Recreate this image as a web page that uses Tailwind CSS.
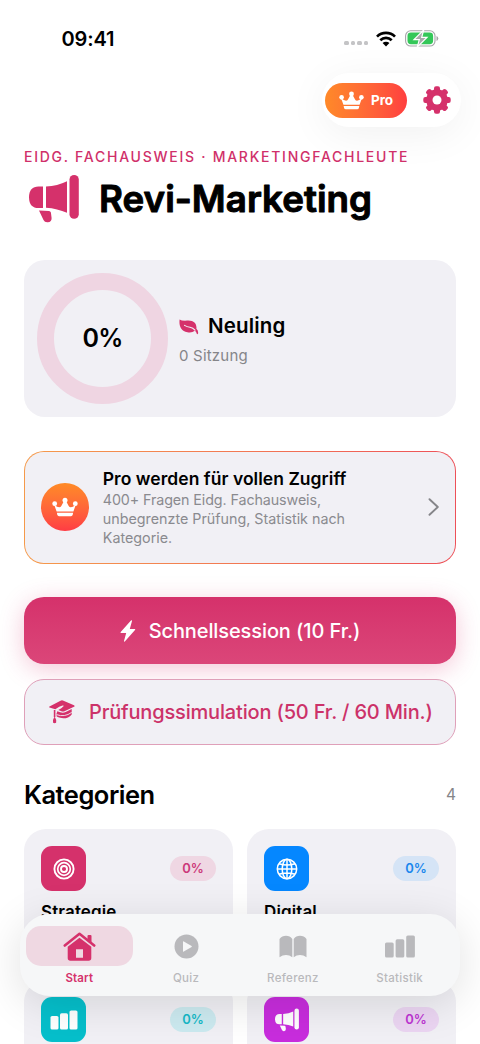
<!DOCTYPE html>
<html lang="de">
<head>
<meta charset="utf-8">
<meta name="viewport" content="width=device-width, initial-scale=1">
<title>Revi-Marketing</title>
<script src="https://cdn.jsdelivr.net/npm/@tailwindcss/browser@4"></script>
</head>
<body class="bg-white">
<svg class="hidden" xmlns="http://www.w3.org/2000/svg">
  <symbol id="crown" viewBox="0 0 26 19">
    <g fill="currentColor"><circle cx="13" cy="2.7" r="2.5"/><circle cx="2.7" cy="6.2" r="2.4"/><circle cx="23.3" cy="6.2" r="2.4"/>
    <path d="M2.2 7.2Q7.6 11.6 9.3 8.4L12 3.5h2l2.700 4.900Q18.400 11.600 23.800 7.200L21.400 14H4.600Z"/>
    <path d="M4.900 15.300h16.200l-.4 2q-.3 1.400-1.700 1.400H7q-1.400 0-1.700-1.400z"/></g>
  </symbol>
  <symbol id="megaphone" viewBox="0 0 50 48">
    <g fill="currentColor"><path d="M14 11.500v21.600H9.500C3.500 33.100 0 29.600 0 22.300s3.500-10.800 9.500-10.800z"/>
    <path d="M17 11.500Q28.500 11 38 6.300v31.500Q28.500 33.500 17 32.700z"/>
    <rect x="40.500" y="0" width="9.300" height="43.800" rx="4.600"/>
    <path d="M10 35.500 14.500 45q1.200 2.600 4.300 2.300 4-.4 3.800-4.300l-.7-5.500q-.5-1.300-1.900-1.400z"/></g>
  </symbol>
</svg>
<div class="relative flex h-[1044px] w-[480px] flex-col overflow-hidden bg-white font-['Inter','Noto_Sans',sans-serif] text-black">
  <!-- status bar -->
  <div class="flex h-[73px] shrink-0 items-start justify-between pl-[61.500px] pr-[41px]">
    <span class="mt-[27px] text-[20px] font-semibold leading-6 tracking-[-0.150px]">09:41</span>
    <div class="mt-[30px] flex items-center">
      <div class="mr-[8px] mt-[9px] flex gap-[2px] text-[#c4c4c6]">
        <i class="h-1 w-[4.500px] rounded-[1.500px] bg-current"></i><i class="h-1 w-[4.500px] rounded-[1.500px] bg-current"></i><i class="h-1 w-[4.500px] rounded-[1.500px] bg-current"></i><i class="h-1 w-[4.500px] rounded-[1.500px] bg-current"></i>
      </div>
      <svg class="mr-[9px] h-[16px] w-[20px]" viewBox="0 0 20 16" fill="none" stroke="#000" stroke-width="2.700"><path d="M1 5.600a12.800 12.800 0 0 1 18 0"/><path d="M4.300 9.200a8.200 8.200 0 0 1 11.400 0"/><path d="M6.600 12.100a4.800 4.800 0 0 1 6.800 0L10 15.500Z" fill="#000" stroke="none"/></svg>
      <svg class="h-[17px] w-[34px]" viewBox="0 0 34 17"><rect x=".6" y=".8" width="29.400" height="15.200" rx="5" fill="none" stroke="#a5a5a8" stroke-width="1.100"/><rect x="2.500" y="2.600" width="25.600" height="11.600" rx="3.400" fill="#34c759"/><path d="M31.500 6v5q1.800-.8 1.800-2.500T31.500 6" fill="#a5a5a8"/><path d="M18.700 0 9 9.600h5.300L12.300 17 22 7.400h-5.300Z" fill="#a9a9ac" stroke="#fff" stroke-width="1.200"/></svg>
    </div>
  </div>
  <!-- toolbar -->
  <div class="ml-auto mr-[19px] flex h-[54px] w-[139px] shrink-0 items-center rounded-full bg-white pl-[3px] shadow-[0_7px_42px_rgba(0,0,0,0.06)]">
    <div class="flex h-[35px] w-[82px] items-center rounded-full bg-linear-to-r from-[#ff8928] to-[#ff3e3f] pl-[14px] text-white">
      <svg class="h-[19px] w-[25px]"><use href="#crown"/></svg>
      <span class="ml-[7px] text-[13.500px] font-bold tracking-[-0.100px]">Pro</span>
    </div>
    <svg class="ml-[16px] h-[28px] w-[28px] text-[#d5316b]" viewBox="-14 -14 28 28" fill="currentColor"><g><rect x="-3" y="-13.700" width="6" height="27.400" rx="2"/><rect x="-3" y="-13.700" width="6" height="27.400" rx="2" transform="rotate(45)"/><rect x="-3" y="-13.700" width="6" height="27.400" rx="2" transform="rotate(90)"/><rect x="-3" y="-13.700" width="6" height="27.400" rx="2" transform="rotate(135)"/></g><circle r="10.800"/><circle r="4.500" fill="#fff"/></svg>
  </div>
  <!-- headline -->
  <div class="mt-[20px] h-5 pl-[24px] text-[14px] font-medium leading-5 tracking-[1.740px] whitespace-nowrap text-[#d0306a]">EIDG. FACHAUSWEIS · MARKETINGFACHLEUTE</div>
  <div class="mt-[8px] flex h-[50px] shrink-0 pl-[29px]">
    <svg class="h-[48px] w-[50px] shrink-0 text-[#d5316b]"><use href="#megaphone"/></svg>
    <svg class="ml-[12px] h-[50px] w-[300px] overflow-visible" role="heading"><text x="8" y="37" textLength="273" lengthAdjust="spacingAndGlyphs" font-size="37" font-weight="600" stroke="#000" stroke-width="1" stroke-linejoin="round">Revi-Marketing</text></svg>
  </div>
  <!-- level card -->
  <div class="mx-6 mt-[35px] flex h-[157px] shrink-0 items-center rounded-[21px] bg-[#f1f0f5] pl-[13px]">
    <div class="flex h-[131px] w-[131px] items-center justify-center rounded-full border-[17px] border-[#efd5e2] text-[25px] font-semibold tracking-[-0.700px]">0%</div>
    <div class="ml-[11px] flex flex-col pt-[3px]">
      <div class="flex h-[26px] items-center">
        <svg class="mr-[9px] h-[16px] w-[20px]" viewBox="0 0 20 16"><path d="M.6.500Q3 2 8 1.600C15 1 18 5 17.400 9.800q1.800 1.300 1.800 4.300-.1 1.300-1.300 1-.6-2.300-2-3.300-3 2.400-7.500 1.500C2 12-.2 7.500.6.500Z" fill="#d5316b"/><path d="M5.500 6.400q2.500 1.600 5.500 1.800 3 .4 5 3" fill="none" stroke="#f1f0f5" stroke-width="1.100" stroke-linecap="round"/></svg>
        <span class="text-[20.500px] font-semibold tracking-[0.150px]">Neuling</span>
      </div>
      <div class="mt-[5px] text-[15px] leading-[22px] tracking-[0.200px] text-[#858589]">0 Sitzung</div>
    </div>
  </div>
  <!-- upgrade card -->
  <div class="mx-6 mt-[34px] h-[113px] shrink-0 rounded-[20px] bg-linear-to-r from-[#f59a4a] to-[#ed5058] p-[1.300px]">
    <div class="flex h-full items-center rounded-[18.700px] bg-[#f1f0f5] pb-[2px] pl-[15.500px] pr-[16px]">
      <div class="flex h-[48px] w-[48px] shrink-0 items-center justify-center rounded-full bg-linear-to-b from-[#ff8a25] to-[#ff3b43] text-white"><svg class="h-[20px] w-[26px]"><use href="#crown"/></svg></div>
      <div class="ml-[14px] grow whitespace-nowrap text-[14.300px] leading-[19px] text-[#8a8a8f]">
        <div class="text-[17.500px] font-semibold leading-[23px] tracking-[0.040px] text-black">Pro werden für vollen Zugriff</div>
        <span class="tracking-[-0.100px]">400+ Fragen Eidg. Fachausweis,</span><br>unbegrenzte Prüfung, Statistik nach<br>Kategorie.
      </div>
      <svg class="h-[18px] w-[11px]" viewBox="0 0 11 18" fill="none" stroke="#858589" stroke-width="1.900" stroke-linecap="round" stroke-linejoin="round"><path d="m1.500 1.200 8.300 7.800-8.300 7.800"/></svg>
    </div>
  </div>
  <!-- actions -->
  <div class="mx-6 mt-[33px] flex h-[67px] shrink-0 items-center justify-center rounded-[20px] bg-linear-to-b from-[#d5316b] to-[#db4679] text-white shadow-[0_5px_24px_rgba(213,49,107,0.27)]">
    <svg class="mr-[13px] h-[22px] w-[16px]" viewBox="0 0 16 22"><path d="M11.200.3.700 12q-.5.800.3.900h5.200L4 21q-.1 1 .8.500L15 10q.7-.9-.3-1.100H9.800L12 1q0-1.100-.8-.7Z" fill="currentColor"/></svg>
    <span class="text-[20px] font-medium tracking-[-0.100px]">Schnellsession (10 Fr.)</span>
  </div>
  <div class="relative mx-6 mt-[15px] flex h-[66px] shrink-0 items-center rounded-[20px] border-[1.500px] border-[#dfa0b9] bg-[#f1f0f5] pl-[24px] text-[#cc3269]">
    <svg class="mr-[14px] h-[24px] w-[26px] shrink-0" viewBox="0 0 26 24"><path d="M.5 6.400 11.500.7q1.500-.7 3 0L25 5.200q1.300.8 0 1.600l-9 4.300q-2 .9-3.600.2L9.300 10q3.400-1.600 5.200-3.700.5-1.100-.9-.7Q10.500 6.500 6.300 9.200L.5 7.500q-.9-.5 0-1.100Z" fill="#d5316b"/><path d="M8.300 11.200q5 2.500 8.400.8l6-2.900v5.300c-3.500 4.500-9.500 5-15 2.200q-.7-3 .6-5.400Z" fill="#d5316b"/><path d="M7.500 14.600q8 3 15.200-2.200" stroke="#f1f0f5" stroke-width=".9" fill="none"/><path d="M5.600 10v7" stroke="#d5316b" stroke-width="1.600"/><path d="M5.600 16.500q2.300 3.500 1.500 6.300-1.600.9-3 0-.8-2.800 1.500-6.300Z" fill="#d5316b"/></svg>
    <span class="whitespace-nowrap text-[20px] font-medium tracking-[-0.170px]">Prüfungssimulation (50 Fr. / 60 Min.)</span>
  </div>
  <!-- categories -->
  <div class="mx-6 mt-[33px] flex h-[34px] shrink-0 items-center justify-between">
    <h2 class="text-[25.500px] font-semibold tracking-[-0.500px]">Kategorien</h2><span class="text-[15.500px] text-[#858589]">4</span>
  </div>
  <div class="mx-6 mt-[17px] grid shrink-0 grid-cols-2 gap-x-[14px] gap-y-[14px]">
    <div class="h-[137px] rounded-[22px] bg-[#f1f0f5] px-[17px] pt-[17px]">
      <div class="flex items-center justify-between">
        <div class="flex h-[45px] w-[45px] items-center justify-center rounded-[11px] bg-[#d5316b]"><svg class="h-[22px] w-[22px]" viewBox="0 0 22 22" fill="none" stroke="#fff"><circle cx="11" cy="11" r="9.600" stroke-width="1.900"/><circle cx="11" cy="11" r="6.300" stroke-width="1.700"/><circle cx="11" cy="11" r="3" stroke-width="1.900"/></svg></div>
        <div class="flex h-[25px] w-[46px] items-center justify-center rounded-full bg-[#efd7e3] text-[13px] font-semibold text-[#cc397a]">0%</div>
      </div>
      <div class="mt-[9px] text-[17px] font-semibold leading-6 tracking-[0.120px]">Strategie</div>
    </div>
    <div class="h-[137px] rounded-[22px] bg-[#f1f0f5] px-[17px] pt-[17px]">
      <div class="flex items-center justify-between">
        <div class="flex h-[45px] w-[45px] items-center justify-center rounded-[11px] bg-[#0587ff]"><svg class="h-[22px] w-[22px]" viewBox="0 0 22 22" fill="none" stroke="#fff" stroke-width="1.500"><circle cx="11" cy="11" r="9.700"/><ellipse cx="11" cy="11" rx="4.800" ry="9.700"/><path d="M11 1v20M1 11h20M3 5.700q8 2.600 16 0M3 16.300q8-2.600 16 0"/></svg></div>
        <div class="flex h-[25px] w-[46px] items-center justify-center rounded-full bg-[#d5e4f6] text-[13px] font-semibold text-[#1b87ed]">0%</div>
      </div>
      <div class="mt-[9px] text-[17px] font-semibold leading-6 tracking-[0.120px]">Digital</div>
    </div>
    <div class="h-[137px] rounded-[22px] bg-[#f1f0f5] px-[17px] pt-[17px]">
      <div class="flex items-center justify-between">
        <div class="flex h-[45px] w-[45px] items-center justify-center rounded-[11px] bg-[#06bfcb]"><svg class="h-[20px] w-[28px]" viewBox="0 0 28 20" fill="#fff"><rect x=".5" y="6" width="8" height="13.500" rx="1.600"/><rect x="10" y="3.300" width="8" height="16.200" rx="1.600"/><rect x="19.500" y=".5" width="8" height="19" rx="1.600"/></svg></div>
        <div class="flex h-[25px] w-[46px] items-center justify-center rounded-full bg-[#cceaf0] text-[13px] font-semibold text-[#16b9c8]">0%</div>
      </div>
    </div>
    <div class="h-[137px] rounded-[22px] bg-[#f1f0f5] px-[17px] pt-[17px]">
      <div class="flex items-center justify-between">
        <div class="flex h-[45px] w-[45px] items-center justify-center rounded-[11px] bg-[#c82ddd] text-white"><svg class="h-[24px] w-[24px]"><use href="#megaphone"/></svg></div>
        <div class="flex h-[25px] w-[46px] items-center justify-center rounded-full bg-[#ebd5f2] text-[13px] font-semibold text-[#bd35d2]">0%</div>
      </div>
    </div>
  </div>
  <!-- floating tab bar -->
  <nav class="absolute left-[20px] top-[914px] grid h-[82px] w-[440px] grid-cols-4 rounded-[30px] bg-[#f6f7f8] pl-[6px] pr-[7px] pt-[12px] text-center text-[11.500px] font-medium tracking-[0.300px] text-[#b9b9bc] shadow-[0_8px_44px_rgba(0,0,0,0.12)]">
    <div class="flex flex-col items-center text-[#d5316b]">
      <div class="flex h-[40px] w-[107px] items-center justify-center rounded-[15px] bg-[#efd8e2]"><svg class="h-[29px] w-[33px]" viewBox="0 0 33 29"><path d="M1.800 13.500 16.500 1.800 31.200 13.500" fill="none" stroke="currentColor" stroke-width="2.600" stroke-linecap="round" stroke-linejoin="round"/><path d="M24.500 4q0-1 1-1h2q1 0 1 1v6.500l-4-3.200Z" fill="currentColor"/><path fill-rule="evenodd" d="M4.700 14.800 16.500 5.800l11.800 9V26q0 2.700-2.700 2.700H7.400q-2.700 0-2.700-2.700ZM13 17.300v8.400h7v-8.400Z" fill="currentColor"/></svg></div>
      <span class="mt-[4px] font-semibold tracking-[0.150px]">Start</span>
    </div>
    <div class="flex flex-col items-center"><div class="flex h-[40px] items-center"><svg class="h-[25px] w-[25px]" viewBox="0 0 25 25"><circle cx="12.500" cy="12.500" r="12" fill="currentColor"/><path d="M9 7.800v9.400q0 .8.800.4l7.800-4.600q.6-.5 0-1L9.800 7.400q-.8-.4-.8.400Z" fill="#f6f7f8"/></svg></div><span class="mt-[4px]">Quiz</span></div>
    <div class="flex flex-col items-center"><div class="flex h-[40px] items-center"><svg class="h-[23px] w-[28px]" viewBox="0 0 28 23" fill="currentColor"><path d="M.5 4Q3 .8 7 .8T13.300 4v18.300Q10.500 20 7 20T.5 22.300ZM14.700 4Q17 .8 21 .8T27.500 4v18.300Q24.500 20 21 20t-6.300 2.300Z"/></svg></div><span class="mt-[4px]">Referenz</span></div>
    <div class="flex flex-col items-center"><div class="flex h-[40px] items-center"><svg class="h-[23px] w-[30px]" viewBox="0 0 30 23" fill="currentColor"><rect x="0" y="7.500" width="8.700" height="15" rx="1.600"/><rect x="10.600" y="4.300" width="8.700" height="18.200" rx="1.600"/><rect x="21.200" y=".5" width="8.700" height="22" rx="1.600"/></svg></div><span class="mt-[4px]">Statistik</span></div>
  </nav>
</div>
</body>
</html>
